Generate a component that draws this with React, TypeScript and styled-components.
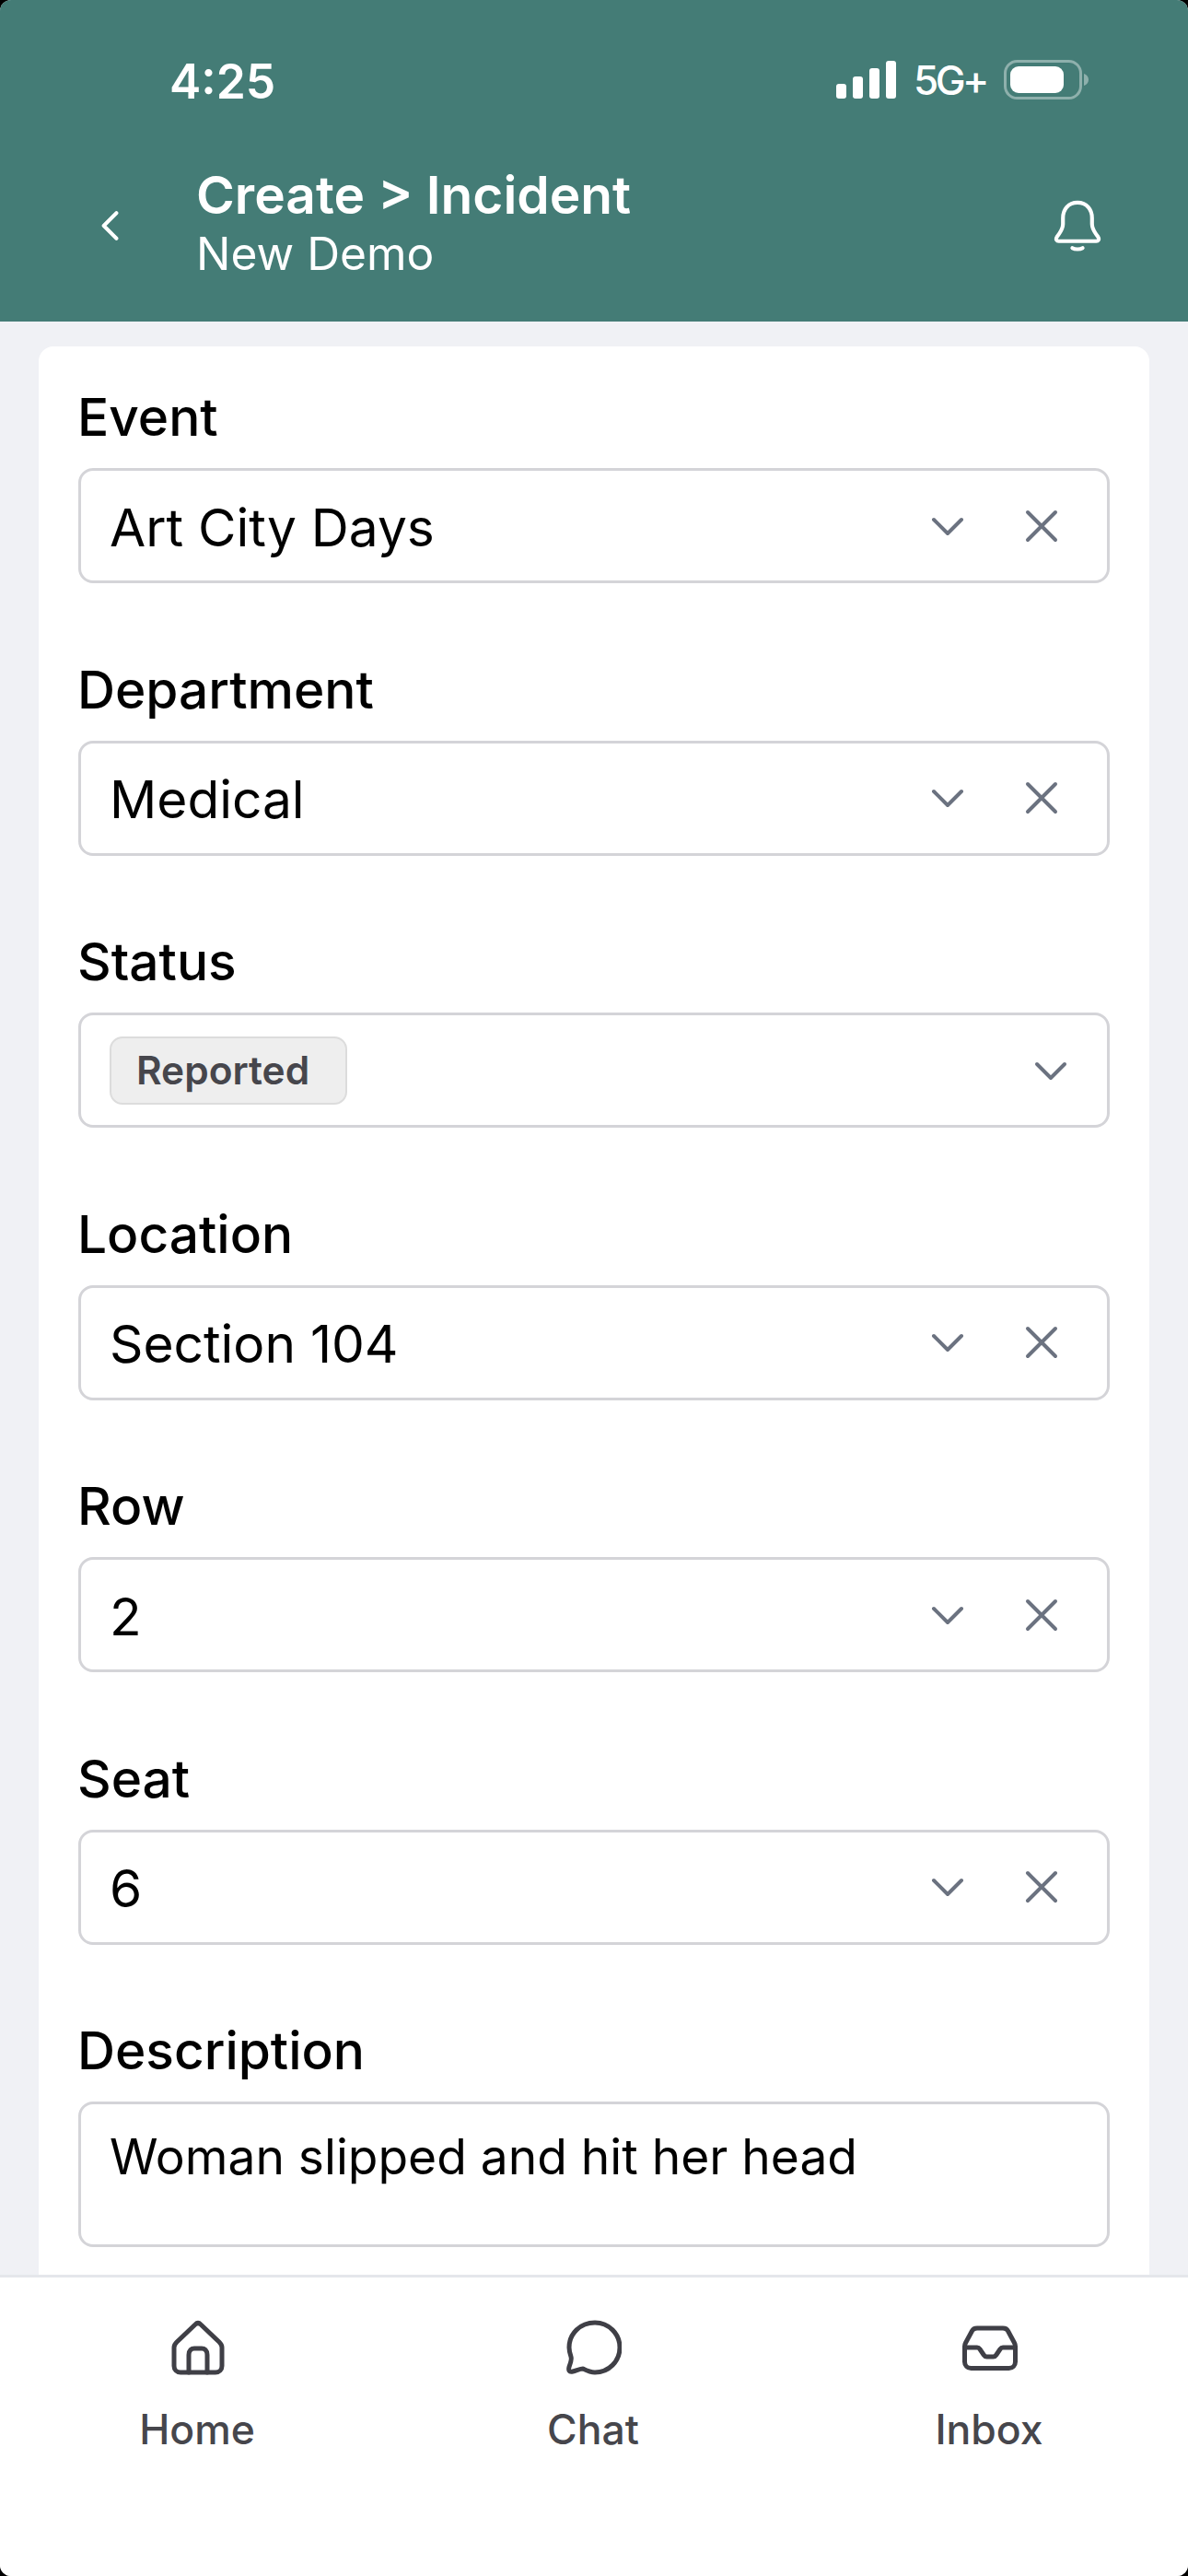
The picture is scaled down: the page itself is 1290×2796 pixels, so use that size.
import React from "react";
import styled, { createGlobalStyle } from "styled-components";

const Global = createGlobalStyle`
  html, body { margin: 0; padding: 0; background: #000; }
  * { box-sizing: border-box; }
`;

const Screen = styled.div`
  width: 1290px;
  height: 2796px;
  display: flex;
  flex-direction: column;
  overflow: hidden;
  border-radius: 12px;
  background: #f0f1f5;
  font-family: Inter, "Liberation Sans", sans-serif;
`;

const Header = styled.header`
  height: 349px;
  flex: none;
  background: #447c76;
  color: #fff;
  display: flex;
  flex-direction: column;
`;

const StatusBar = styled.div`
  display: flex;
  align-items: center;
  justify-content: space-between;
  padding: 57px 107px 0 184px;
  height: 116px;
`;

const Time = styled.span`
  font-size: 51.5px;
  font-weight: 600;
  line-height: 56px;
  padding-top: 3px;
`;

const StatusIcons = styled.div`
  display: flex;
  align-items: center;
  gap: 19px;
`;

const Network = styled.span`
  font-size: 44px;
  font-weight: 500;
  letter-spacing: -3.5px;
  line-height: 44px;
`;

const NavBar = styled.div`
  display: flex;
  align-items: center;
  padding: 62px 94px 0 98px;
`;

const NavIcon = styled.div`
  display: flex;
  margin-top: 8px;
`;

const TitleBlock = styled.div`
  flex: 1;
  margin-left: 71px;
  display: flex;
  flex-direction: column;
`;

const Title = styled.div`
  font-size: 56.8px;
  font-weight: 600;
  line-height: 68px;
`;

const Subtitle = styled.div`
  font-size: 49.7px;
  font-weight: 400;
  line-height: 58px;
`;

const Content = styled.main`
  flex: 1;
  min-height: 0;
  overflow: hidden;
  padding: 27px 42px 0;
`;

const Card = styled.div`
  background: #fff;
  border-radius: 16px;
  padding: 34px 43px 120px;
  display: flex;
  flex-direction: column;
  gap: 72.5px;
`;

const Field = styled.div`
  display: flex;
  flex-direction: column;
`;

const Label = styled.label`
  font-size: 56.8px;
  font-weight: 500;
  line-height: 86px;
  height: 86px;
  margin-bottom: 12px;
  margin-left: -1px;
  color: #000;
`;

const Control = styled.div`
  height: 125px;
  border: 3px solid #d4d4d8;
  border-radius: 16px;
  display: flex;
  align-items: center;
  padding: 0 31px;
`;

const Value = styled.span`
  flex: 1;
  font-size: 56.8px;
  font-weight: 400;
  color: #000;
  padding-top: 3px;
`;

const Chip = styled.span`
  height: 74px;
  padding: 0 39px 0 27px;
  display: inline-flex;
  align-items: center;
  background: #eeeeee;
  border: 2px solid #dcdcdc;
  border-radius: 14px;
  font-size: 42.4px;
  font-weight: 600;
  color: #46464c;
`;

const Spacer = styled.div`
  flex: 1;
`;

const Actions = styled.div`
  display: flex;
  align-items: center;
  gap: 54px;
  margin-right: 16px;
`;

const LoneAction = styled.div`
  display: flex;
  margin-right: 6px;
`;

const TextArea = styled.div`
  height: 158px;
  border: 3px solid #d4d4d8;
  border-radius: 16px;
  padding: 24px 31px;
  font-size: 53.3px;
  line-height: 66px;
  color: #000;
`;

const TabBar = styled.nav`
  flex: none;
  height: 327px;
  border-top: 3px solid #e5e7eb;
  background: #fff;
  display: grid;
  grid-template-columns: repeat(3, 1fr);
  padding: 46px 0 0;
`;

const Tab = styled.div`
  display: flex;
  flex-direction: column;
  align-items: center;
  color: #46464c;
`;

const TabIcon = styled.div`
  height: 60px;
  display: flex;
  align-items: center;
  justify-content: center;
`;

const TabLabel = styled.span`
  margin: 29px 2px 0 0;
  font-size: 44.5px;
  font-weight: 450;
  line-height: 60px;
`;

const Signal = () => (
  <svg width="65" height="41" viewBox="0 0 65 41" fill="#fff">
    <rect x="0" y="25" width="11" height="16" rx="3" />
    <rect x="18" y="17" width="11" height="24" rx="3" />
    <rect x="36" y="8" width="11" height="33" rx="3" />
    <rect x="54" y="0" width="11" height="41" rx="3" />
  </svg>
);

const Battery = () => (
  <svg width="93" height="43" viewBox="0 0 93 43" fill="none">
    <rect x="1.5" y="1.5" width="82" height="40" rx="13" stroke="#fff" strokeOpacity="0.4" strokeWidth="3" />
    <rect x="7" y="7" width="58" height="29" rx="9" fill="#fff" />
    <path d="M87 15c3 1 5 3.500 5 6.500s-2 5.500-5 6.500z" fill="#fff" fillOpacity="0.4" />
  </svg>
);

const Chevron = () => (
  <svg width="48" height="48" viewBox="0 0 24 24" fill="none" stroke="#6b7280" strokeWidth="2" strokeLinecap="round" strokeLinejoin="round">
    <path d="M4.500 8.500 12 16l7.500-7.500" />
  </svg>
);

const Cross = () => (
  <svg width="48" height="48" viewBox="0 0 24 24" fill="none" stroke="#6b7280" strokeWidth="2" strokeLinecap="round">
    <path d="M4.500 4.500l15 15M19.500 4.500l-15 15" />
  </svg>
);

const Back = () => (
  <svg width="44" height="44" viewBox="0 0 24 24" fill="none" stroke="#fff" strokeWidth="2.200" strokeLinecap="round" strokeLinejoin="round">
    <path d="M15.500 4.500 8 12l7.500 7.500" />
  </svg>
);

const Bell = () => (
  <svg width="52" height="56" viewBox="0 0 56 60" fill="none" stroke="#fff" strokeWidth="4.500" strokeLinecap="round" strokeLinejoin="round">
    <path d="M28 3C17 3 11 11 11 21v7c0 6-4 11-7 15-2 3 0 5 2 5h44c2 0 4-2 2-5-3-4-7-9-7-15v-7C45 11 39 3 28 3z" />
    <path d="M22 56c3 2 9 2 12 0" />
  </svg>
);

const HomeIcon = () => (
  <svg width="60" height="60" viewBox="0 0 60 60" fill="none" stroke="#3f3f46" strokeWidth="5" strokeLinecap="round" strokeLinejoin="round">
    <path d="M27 5 7 24c-2 2-3 4-3 6v20c0 4 3 7 7 7h38c4 0 7-3 7-7V30c0-2-1-4-3-6L33 5c-2-2-4-2-6 0z" />
    <path d="M20 57V38c0-5 3-7 6-7h8c3 0 6 2 6 7v19" />
  </svg>
);

const ChatIcon = () => (
  <svg width="60" height="60" viewBox="0 0 60 60" fill="none" stroke="#3f3f46" strokeWidth="5" strokeLinecap="round" strokeLinejoin="round">
    <path d="M31 3C15 3 3 15 3 30c0 4 1 7 2 10 1 3 0 6-2 11-1 4 0 6 4 5 4-1 8-3 11-3 4 2 8 4 13 4 15 0 27-12 27-27S46 3 31 3z" />
  </svg>
);

const InboxIcon = () => (
  <svg width="60" height="49" viewBox="0 0 60 49" fill="none" stroke="#3f3f46" strokeWidth="5" strokeLinecap="round" strokeLinejoin="round">
    <path d="M16 3h28c2.500 0 4.500 1 5.500 3l7 13c.7 1.300 1 2.500 1 4v16.500c0 4-3 7-7 7h-41c-4 0-7-3-7-7V23c0-1.500.3-2.700 1-4l7-13c1-2 3-3 5.500-3z" />
    <path d="M2.500 24H16c1.200 0 2.200.5 2.800 1.500l4.400 6.500c.8 1.200 1.800 2 3.300 2h7c1.500 0 2.500-.8 3.300-2l4.400-6.500c.6-1 1.600-1.500 2.800-1.500h13.500" />
  </svg>
);

const selectFields = [
  { label: "Event", value: "Art City Days" },
  { label: "Department", value: "Medical" },
  { label: "Status", chip: "Reported" },
  { label: "Location", value: "Section 104" },
  { label: "Row", value: "2" },
  { label: "Seat", value: "6" },
];

const tabs = [
  { label: "Home", icon: <HomeIcon /> },
  { label: "Chat", icon: <ChatIcon /> },
  { label: "Inbox", icon: <InboxIcon /> },
];

export default function App() {
  return (
    <>
      <Global />
      <Screen>
        <Header>
          <StatusBar>
            <Time>4:25</Time>
            <StatusIcons>
              <Signal />
              <Network>5G+</Network>
              <Battery />
            </StatusIcons>
          </StatusBar>
          <NavBar>
            <NavIcon>
              <Back />
            </NavIcon>
            <TitleBlock>
              <Title>Create &gt; Incident</Title>
              <Subtitle>New Demo</Subtitle>
            </TitleBlock>
            <NavIcon>
              <Bell />
            </NavIcon>
          </NavBar>
        </Header>
        <Content>
          <Card>
            {selectFields.map((f) => (
              <Field key={f.label}>
                <Label>{f.label}</Label>
                <Control>
                  {f.chip ? (
                    <>
                      <Chip>{f.chip}</Chip>
                      <Spacer />
                      <LoneAction>
                        <Chevron />
                      </LoneAction>
                    </>
                  ) : (
                    <>
                      <Value>{f.value}</Value>
                      <Actions>
                        <Chevron />
                        <Cross />
                      </Actions>
                    </>
                  )}
                </Control>
              </Field>
            ))}
            <Field>
              <Label>Description</Label>
              <TextArea>Woman slipped and hit her head</TextArea>
            </Field>
          </Card>
        </Content>
        <TabBar>
          {tabs.map((t) => (
            <Tab key={t.label}>
              <TabIcon>{t.icon}</TabIcon>
              <TabLabel>{t.label}</TabLabel>
            </Tab>
          ))}
        </TabBar>
      </Screen>
    </>
  );
}
